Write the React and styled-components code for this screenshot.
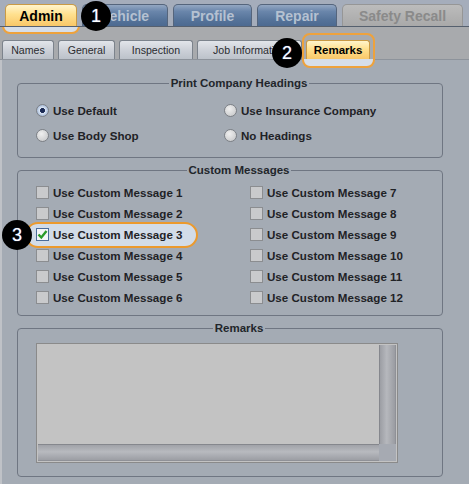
import styled, { createGlobalStyle, css } from "styled-components";

const GlobalStyle = createGlobalStyle`
  html, body {
    margin: 0;
    padding: 0;
    background: #a4abb4;
  }
  body {
    font-family: "Liberation Sans", Arial, sans-serif;
  }
`;

const mainTabs = [
  { label: "Admin", width: 72, state: "active" },
  { label: "Vehicle", width: 86, state: "normal" },
  { label: "Profile", width: 79, state: "normal" },
  { label: "Repair", width: 80, state: "normal" },
  { label: "Safety Recall", width: 121, state: "disabled" },
];

const subTabs = [
  { label: "Names", width: 52 },
  { label: "General", width: 57 },
  { label: "Inspection", width: 74 },
  { label: "Job Information", width: 105 },
  { label: "Remarks", width: 64, active: true },
];

const headingOptions = [
  { label: "Use Default", checked: true },
  { label: "Use Body Shop" },
  { label: "Use Insurance Company" },
  { label: "No Headings" },
];

const messages = Array.from({ length: 12 }, (_, i) => ({
  label: `Use Custom Message ${i + 1}`,
  checked: i === 2,
  highlight: i === 2,
}));

const Screen = styled.div`
  position: relative;
  width: 469px;
  height: 484px;
  overflow: hidden;
  background: #a4abb4;
  display: flex;
  flex-direction: column;
`;

const TopBar = styled.div`
  height: 27px;
  box-sizing: border-box;
  display: flex;
  align-items: flex-end;
  gap: 5px;
  padding-left: 5px;
  background: #a5adbb;
  border-bottom: 1px solid #56606e;
`;

const ring = css`
  &::after {
    content: "";
    position: absolute;
    z-index: -1;
    border: 2px solid #eea23c;
    border-radius: 8px;
    pointer-events: none;
  }
`;

const MainTab = styled.div`
  position: relative;
  width: ${(p) => p.$w}px;
  height: 22px;
  box-sizing: border-box;
  display: flex;
  align-items: center;
  justify-content: center;
  font-size: 14px;
  font-weight: bold;
  border: 1px solid #55657c;
  border-bottom: none;
  border-radius: 5px 5px 0 0;
  background: linear-gradient(#93a7c2, #6a86ab 30%, #557399 70%, #4d6a91);
  color: #b5c1d1;
  ${(p) =>
    p.$state === "disabled" &&
    css`
      background: linear-gradient(#bcbcbc, #b2b2b2 50%, #a9a9a9);
      border-color: #969696;
      color: #8a8a8a;
    `}
  ${(p) =>
    p.$state === "active" &&
    css`
      background: linear-gradient(#fff4cc, #ffe08e 45%, #f9c768);
      border-color: #c99a45;
      color: #000;
      ${ring}
      &::after {
        top: -3px;
        left: -4px;
        right: -4px;
        bottom: -8px;
        background: linear-gradient(transparent 22px, #d6dee9 22px);
      }
    `}
`;

const TopArea = styled.div`
  position: relative;
  background: #a8aaad;
  isolation: isolate;
`;

const SubBar = styled.div`
  position: relative;
  z-index: 1;
  height: 33px;
  box-sizing: border-box;
  display: flex;
  align-items: flex-end;
  gap: 4px;
  padding-left: 2px;
  border-bottom: 1px solid #8d939b;
`;

const SubTab = styled.div`
  position: relative;
  width: ${(p) => p.$w}px;
  height: 19px;
  box-sizing: border-box;
  display: flex;
  align-items: center;
  justify-content: center;
  white-space: nowrap;
  font-size: 10.6px;
  color: #2a2c30;
  border: 1px solid #7c838c;
  border-bottom: none;
  border-radius: 3px 3px 0 0;
  background: linear-gradient(#e2e5ea, #cdd1d8 50%, #bcc2ca);
  ${(p) =>
    p.$active &&
    css`
      font-weight: bold;
      font-size: 11.5px;
      color: #000;
      border-color: #c99a45;
      background: linear-gradient(#fff4cc, #ffe08e 45%, #f9c768);
      ${ring}
      &::after {
        top: -8px;
        left: -5px;
        right: -6px;
        bottom: -9px;
        background: linear-gradient(transparent 24px, #d6dee9 24px);
      }
    `}
`;

const Content = styled.div`
  flex: 1;
  display: flex;
  flex-direction: column;
  gap: 5px;
  padding: 16px 26px 0 15px;
  border-left: 2px solid #bfc2c7;
`;

const Group = styled.fieldset`
  margin: 0;
  min-width: 0;
  padding: ${(p) => p.$pad};
  border: 1px solid #6f7682;
  border-radius: 4px;
`;

const Legend = styled.legend`
  margin: 0 auto;
  padding: 0 2px;
  font-size: 11.5px;
  font-weight: bold;
  line-height: 14px;
  color: #22262b;
`;

const OptionGrid = styled.div`
  display: grid;
  grid-template-columns: ${(p) => p.$col}px 1fr;
  grid-template-rows: repeat(${(p) => p.$rows}, ${(p) => p.$rowH}px);
  grid-auto-flow: column;
`;

const Option = styled.label`
  position: relative;
  isolation: isolate;
  display: flex;
  align-items: center;
  gap: 4px;
  font-size: 11.6px;
  font-weight: bold;
  color: #1f2226;
  white-space: nowrap;
  ${(p) =>
    p.$highlight &&
    css`
      &::before {
        content: "";
        position: absolute;
        z-index: -1;
        left: -11px;
        width: 173px;
        top: -2px;
        bottom: -3px;
        box-sizing: border-box;
        border: 2px solid #eb9a2e;
        border-radius: 13px;
        background: #d2dce8;
      }
    `}
`;

const Radio = styled.span`
  flex: none;
  width: 13px;
  height: 13px;
  box-sizing: border-box;
  border-radius: 50%;
  border: 1px solid #7c8086;
  background: radial-gradient(circle at 40% 35%, #efefef, #c2c3c5);
  ${(p) =>
    p.$checked &&
    css`
      background: radial-gradient(circle, #1b2b55 0 2.2px, #dce6f4 2.8px, #a9bcd8 5.5px);
    `}
`;

const Check = styled.span`
  flex: none;
  width: 13px;
  height: 13px;
  box-sizing: border-box;
  border: 1px solid #8b8d90;
  background: #c9cacc;
  display: flex;
  align-items: center;
  justify-content: center;
  ${(p) =>
    p.$checked &&
    css`
      border-color: #4a6c9a;
      background: #f4f6f8;
    `}
`;

const RemarksBox = styled.div`
  width: 362px;
  height: 120px;
  box-sizing: border-box;
  border: 1px solid #8a8a8a;
  padding: 1px;
  background: #c3c3c3;
  display: grid;
  grid-template-columns: 1fr 17px;
  grid-template-rows: 1fr 17px;
`;

const VScroll = styled.div`
  border-left: 1px solid #85878d;
  border-right: 1px solid #8f9197;
  background: linear-gradient(to right, #9c9ea4, #b6b8bd 45%, #9a9ca2);
`;

const HScroll = styled.div`
  border-top: 1px solid #85878d;
  border-bottom: 1px solid #8f9197;
  background: linear-gradient(#a0a2a8, #b8babf 45%, #9c9ea4);
`;

const Corner = styled.div`
  background: #a6aab2;
`;

const Badge = styled.div`
  position: absolute;
  z-index: 5;
  left: ${(p) => p.$x}px;
  top: ${(p) => p.$y}px;
  width: 30px;
  height: 30px;
  border-radius: 50%;
  background: #000;
  color: #fff;
  display: flex;
  align-items: center;
  justify-content: center;
  font-size: 18px;
  text-shadow: 0 0 1px #7aa0ff;
`;

const CheckMark = () => (
  <svg width="11" height="11" viewBox="0 0 11 11">
    <polyline points="1.5,5.5 4.3,8.5 9.5,2" fill="none" stroke="#2a9b2a" strokeWidth="2.4" />
  </svg>
);

export default function App() {
  return (
    <Screen>
      <GlobalStyle />
      <TopArea>
        <TopBar>
          {mainTabs.map((t) => (
            <MainTab key={t.label} $w={t.width} $state={t.state}>
              {t.label}
            </MainTab>
          ))}
        </TopBar>
        <SubBar>
          {subTabs.map((t) => (
            <SubTab key={t.label} $w={t.width} $active={t.active}>
              {t.label}
            </SubTab>
          ))}
        </SubBar>
      </TopArea>

      <Content>
        <Group $pad="8px 0 9px 18px">
          <Legend>Print Company Headings</Legend>
          <OptionGrid $col={188} $rows={2} $rowH={25}>
            {headingOptions.map((o) => (
              <Option key={o.label}>
                <Radio $checked={o.checked} />
                {o.label}
              </Option>
            ))}
          </OptionGrid>
        </Group>

        <Group $pad="5px 0 7px 18px">
          <Legend>Custom Messages</Legend>
          <OptionGrid $col={214} $rows={6} $rowH={21}>
            {messages.map((m) => (
              <Option key={m.label} $highlight={m.highlight}>
                <Check $checked={m.checked}>{m.checked && <CheckMark />}</Check>
                {m.label}
              </Option>
            ))}
          </OptionGrid>
        </Group>

        <Group $pad="8px 0 13px 18px">
          <Legend>Remarks</Legend>
          <RemarksBox>
            <div />
            <VScroll />
            <HScroll />
            <Corner />
          </RemarksBox>
        </Group>
      </Content>

      <Badge $x={81} $y={1}>1</Badge>
      <Badge $x={272} $y={38}>2</Badge>
      <Badge $x={2} $y={220}>3</Badge>
    </Screen>
  );
}
